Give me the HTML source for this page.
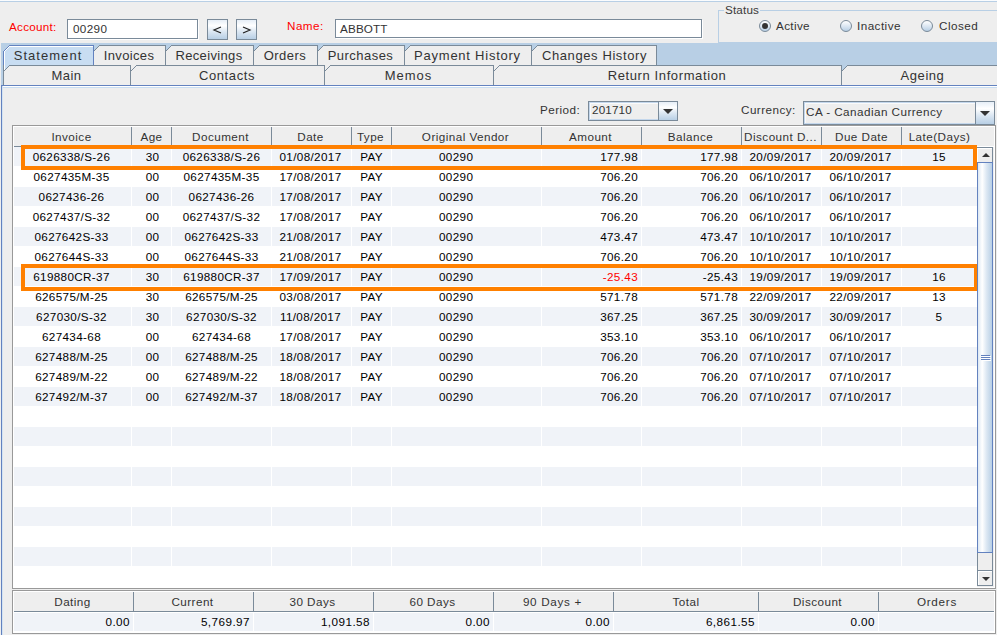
<!DOCTYPE html>
<html><head><meta charset="utf-8"><style>
html,body{margin:0;padding:0}
body{width:997px;height:635px;overflow:hidden;position:relative;background:#eeeeee;font-family:"Liberation Sans",sans-serif;color:#333}
.a{position:absolute}
.t{position:absolute;white-space:pre;line-height:1}
svg.a{display:block}
</style></head><body>
<div class="a" style="left:0px;top:0px;width:997px;height:1px;background:#fafcfe"></div>
<div class="a" style="left:0px;top:1px;width:997px;height:1px;background:#b8cfe5"></div>
<div class="t" style="left:9px;top:21px;font-size:11.7px;color:#ff0000;letter-spacing:0.25px;">Account:</div>
<div class="a" style="left:67px;top:19px;width:131px;height:20px;background:#fff;border:1px solid #7a8a99;box-sizing:border-box;box-shadow:1px 1px 0 #fff"></div>
<div class="t" style="left:73px;top:23px;font-size:11.7px;color:#333;letter-spacing:0.35px;">00290</div>
<div class="a" style="left:207px;top:19px;width:21px;height:21px;border:1px solid #7a8a99;box-sizing:border-box;background:linear-gradient(#e6eef7,#ffffff 30%,#dde8f3 60%,#b8cfe5)"></div>
<svg class="a" style="left:207px;top:19px" width="21" height="21"><polyline points="14,8 7,11 14,14" fill="none" stroke="#222" stroke-width="1.2"/></svg>
<div class="a" style="left:236px;top:19px;width:21px;height:21px;border:1px solid #7a8a99;box-sizing:border-box;background:linear-gradient(#e6eef7,#ffffff 30%,#dde8f3 60%,#b8cfe5)"></div>
<svg class="a" style="left:236px;top:19px" width="21" height="21"><polyline points="7,8 14,11 7,14" fill="none" stroke="#222" stroke-width="1.2"/></svg>
<div class="t" style="left:287px;top:20px;font-size:11.7px;color:#ff0000;letter-spacing:0.45px;">Name:</div>
<div class="a" style="left:335px;top:19px;width:367px;height:19px;background:#fff;border:1px solid #7a8a99;box-sizing:border-box;box-shadow:1px 1px 0 #fff"></div>
<div class="t" style="left:340px;top:23px;font-size:11.7px;letter-spacing:0.15px;color:#333;">ABBOTT</div>
<div class="a" style="left:718px;top:10px;width:290px;height:33px;border:1px solid #b8cfe5;box-sizing:border-box"></div>
<div class="a" style="left:724px;top:2px;width:36px;height:14px;background:#eeeeee"></div>
<div class="t" style="left:725px;top:4px;font-size:11.7px;letter-spacing:0.15px;color:#3a3a3a;">Status</div>
<div class="a" style="left:759px;top:20px;width:12px;height:12px;border-radius:50%;border:1px solid #7a8a99;box-sizing:border-box;background:linear-gradient(#ffffff,#dde8f3 50%,#b8cfe5)"></div>
<div class="a" style="left:762px;top:23px;width:6px;height:6px;border-radius:50%;background:#333"></div>
<div class="t" style="left:776px;top:20px;font-size:11.7px;color:#333;letter-spacing:0.35px;">Active</div>
<div class="a" style="left:840px;top:20px;width:12px;height:12px;border-radius:50%;border:1px solid #7a8a99;box-sizing:border-box;background:linear-gradient(#ffffff,#dde8f3 50%,#b8cfe5)"></div>
<div class="t" style="left:857px;top:20px;font-size:11.7px;color:#333;letter-spacing:0.45px;">Inactive</div>
<div class="a" style="left:921px;top:20px;width:12px;height:12px;border-radius:50%;border:1px solid #7a8a99;box-sizing:border-box;background:linear-gradient(#ffffff,#dde8f3 50%,#b8cfe5)"></div>
<div class="t" style="left:939px;top:20px;font-size:11.7px;color:#333;letter-spacing:0.45px;">Closed</div>
<div class="a" style="left:1px;top:43px;width:717px;height:42px;background:#b8cfe5"></div>
<div class="a" style="left:718px;top:42px;width:279px;height:43px;background:#b8cfe5"></div>
<svg class="a" style="left:3px;top:45px" width="91" height="26" shape-rendering="crispEdges"><rect x="1" y="6" width="90" height="20" fill="#c8ddf2"/><rect x="6" y="1" width="85" height="1" fill="#c8ddf2"/><rect x="5" y="2" width="86" height="1" fill="#c8ddf2"/><rect x="4" y="3" width="87" height="1" fill="#c8ddf2"/><rect x="3" y="4" width="88" height="1" fill="#c8ddf2"/><rect x="2" y="5" width="89" height="1" fill="#c8ddf2"/><rect x="6" y="0" width="85" height="1" fill="#6382bf"/><rect x="1" y="5" width="1" height="1" fill="#6382bf"/><rect x="2" y="4" width="1" height="1" fill="#6382bf"/><rect x="3" y="3" width="1" height="1" fill="#6382bf"/><rect x="4" y="2" width="1" height="1" fill="#6382bf"/><rect x="5" y="1" width="1" height="1" fill="#6382bf"/><rect x="1" y="6" width="1" height="1" fill="#fff"/><rect x="2" y="5" width="1" height="1" fill="#fff"/><rect x="3" y="4" width="1" height="1" fill="#fff"/><rect x="4" y="3" width="1" height="1" fill="#fff"/><rect x="5" y="2" width="1" height="1" fill="#fff"/><rect x="6" y="1" width="84" height="1" fill="#fff"/><rect x="1" y="6" width="1" height="20" fill="#fff"/><rect x="0" y="6" width="1" height="20" fill="#6382bf"/><rect x="90" y="0" width="1" height="26" fill="#6382bf"/></svg>
<svg class="a" style="left:93px;top:45px" width="73" height="26" shape-rendering="crispEdges"><rect x="1" y="6" width="72" height="20" fill="#eeeeee"/><rect x="6" y="1" width="67" height="1" fill="#eeeeee"/><rect x="5" y="2" width="68" height="1" fill="#eeeeee"/><rect x="4" y="3" width="69" height="1" fill="#eeeeee"/><rect x="3" y="4" width="70" height="1" fill="#eeeeee"/><rect x="2" y="5" width="71" height="1" fill="#eeeeee"/><rect x="6" y="0" width="67" height="1" fill="#7a8a99"/><rect x="1" y="5" width="1" height="1" fill="#7a8a99"/><rect x="2" y="4" width="1" height="1" fill="#7a8a99"/><rect x="3" y="3" width="1" height="1" fill="#7a8a99"/><rect x="4" y="2" width="1" height="1" fill="#7a8a99"/><rect x="5" y="1" width="1" height="1" fill="#7a8a99"/><rect x="72" y="0" width="1" height="26" fill="#7a8a99"/></svg>
<svg class="a" style="left:165px;top:45px" width="89" height="26" shape-rendering="crispEdges"><rect x="1" y="6" width="88" height="20" fill="#eeeeee"/><rect x="6" y="1" width="83" height="1" fill="#eeeeee"/><rect x="5" y="2" width="84" height="1" fill="#eeeeee"/><rect x="4" y="3" width="85" height="1" fill="#eeeeee"/><rect x="3" y="4" width="86" height="1" fill="#eeeeee"/><rect x="2" y="5" width="87" height="1" fill="#eeeeee"/><rect x="6" y="0" width="83" height="1" fill="#7a8a99"/><rect x="1" y="5" width="1" height="1" fill="#7a8a99"/><rect x="2" y="4" width="1" height="1" fill="#7a8a99"/><rect x="3" y="3" width="1" height="1" fill="#7a8a99"/><rect x="4" y="2" width="1" height="1" fill="#7a8a99"/><rect x="5" y="1" width="1" height="1" fill="#7a8a99"/><rect x="88" y="0" width="1" height="26" fill="#7a8a99"/></svg>
<svg class="a" style="left:253px;top:45px" width="65" height="26" shape-rendering="crispEdges"><rect x="1" y="6" width="64" height="20" fill="#eeeeee"/><rect x="6" y="1" width="59" height="1" fill="#eeeeee"/><rect x="5" y="2" width="60" height="1" fill="#eeeeee"/><rect x="4" y="3" width="61" height="1" fill="#eeeeee"/><rect x="3" y="4" width="62" height="1" fill="#eeeeee"/><rect x="2" y="5" width="63" height="1" fill="#eeeeee"/><rect x="6" y="0" width="59" height="1" fill="#7a8a99"/><rect x="1" y="5" width="1" height="1" fill="#7a8a99"/><rect x="2" y="4" width="1" height="1" fill="#7a8a99"/><rect x="3" y="3" width="1" height="1" fill="#7a8a99"/><rect x="4" y="2" width="1" height="1" fill="#7a8a99"/><rect x="5" y="1" width="1" height="1" fill="#7a8a99"/><rect x="64" y="0" width="1" height="26" fill="#7a8a99"/></svg>
<svg class="a" style="left:317px;top:45px" width="88" height="26" shape-rendering="crispEdges"><rect x="1" y="6" width="87" height="20" fill="#eeeeee"/><rect x="6" y="1" width="82" height="1" fill="#eeeeee"/><rect x="5" y="2" width="83" height="1" fill="#eeeeee"/><rect x="4" y="3" width="84" height="1" fill="#eeeeee"/><rect x="3" y="4" width="85" height="1" fill="#eeeeee"/><rect x="2" y="5" width="86" height="1" fill="#eeeeee"/><rect x="6" y="0" width="82" height="1" fill="#7a8a99"/><rect x="1" y="5" width="1" height="1" fill="#7a8a99"/><rect x="2" y="4" width="1" height="1" fill="#7a8a99"/><rect x="3" y="3" width="1" height="1" fill="#7a8a99"/><rect x="4" y="2" width="1" height="1" fill="#7a8a99"/><rect x="5" y="1" width="1" height="1" fill="#7a8a99"/><rect x="87" y="0" width="1" height="26" fill="#7a8a99"/></svg>
<svg class="a" style="left:404px;top:45px" width="128" height="26" shape-rendering="crispEdges"><rect x="1" y="6" width="127" height="20" fill="#eeeeee"/><rect x="6" y="1" width="122" height="1" fill="#eeeeee"/><rect x="5" y="2" width="123" height="1" fill="#eeeeee"/><rect x="4" y="3" width="124" height="1" fill="#eeeeee"/><rect x="3" y="4" width="125" height="1" fill="#eeeeee"/><rect x="2" y="5" width="126" height="1" fill="#eeeeee"/><rect x="6" y="0" width="122" height="1" fill="#7a8a99"/><rect x="1" y="5" width="1" height="1" fill="#7a8a99"/><rect x="2" y="4" width="1" height="1" fill="#7a8a99"/><rect x="3" y="3" width="1" height="1" fill="#7a8a99"/><rect x="4" y="2" width="1" height="1" fill="#7a8a99"/><rect x="5" y="1" width="1" height="1" fill="#7a8a99"/><rect x="127" y="0" width="1" height="26" fill="#7a8a99"/></svg>
<svg class="a" style="left:531px;top:45px" width="126" height="26" shape-rendering="crispEdges"><rect x="1" y="6" width="125" height="20" fill="#eeeeee"/><rect x="6" y="1" width="120" height="1" fill="#eeeeee"/><rect x="5" y="2" width="121" height="1" fill="#eeeeee"/><rect x="4" y="3" width="122" height="1" fill="#eeeeee"/><rect x="3" y="4" width="123" height="1" fill="#eeeeee"/><rect x="2" y="5" width="124" height="1" fill="#eeeeee"/><rect x="6" y="0" width="120" height="1" fill="#7a8a99"/><rect x="1" y="5" width="1" height="1" fill="#7a8a99"/><rect x="2" y="4" width="1" height="1" fill="#7a8a99"/><rect x="3" y="3" width="1" height="1" fill="#7a8a99"/><rect x="4" y="2" width="1" height="1" fill="#7a8a99"/><rect x="5" y="1" width="1" height="1" fill="#7a8a99"/><rect x="125" y="0" width="1" height="26" fill="#7a8a99"/></svg>
<svg class="a" style="left:3px;top:65px" width="128" height="20" shape-rendering="crispEdges"><rect x="1" y="6" width="127" height="14" fill="#eeeeee"/><rect x="6" y="1" width="122" height="1" fill="#eeeeee"/><rect x="5" y="2" width="123" height="1" fill="#eeeeee"/><rect x="4" y="3" width="124" height="1" fill="#eeeeee"/><rect x="3" y="4" width="125" height="1" fill="#eeeeee"/><rect x="2" y="5" width="126" height="1" fill="#eeeeee"/><rect x="6" y="0" width="122" height="1" fill="#7a8a99"/><rect x="1" y="5" width="1" height="1" fill="#7a8a99"/><rect x="2" y="4" width="1" height="1" fill="#7a8a99"/><rect x="3" y="3" width="1" height="1" fill="#7a8a99"/><rect x="4" y="2" width="1" height="1" fill="#7a8a99"/><rect x="5" y="1" width="1" height="1" fill="#7a8a99"/><rect x="0" y="0" width="1" height="20" fill="#7a8a99"/><rect x="127" y="0" width="1" height="20" fill="#7a8a99"/></svg>
<svg class="a" style="left:130px;top:65px" width="195" height="20" shape-rendering="crispEdges"><rect x="1" y="6" width="194" height="14" fill="#eeeeee"/><rect x="6" y="1" width="189" height="1" fill="#eeeeee"/><rect x="5" y="2" width="190" height="1" fill="#eeeeee"/><rect x="4" y="3" width="191" height="1" fill="#eeeeee"/><rect x="3" y="4" width="192" height="1" fill="#eeeeee"/><rect x="2" y="5" width="193" height="1" fill="#eeeeee"/><rect x="6" y="0" width="189" height="1" fill="#7a8a99"/><rect x="1" y="5" width="1" height="1" fill="#7a8a99"/><rect x="2" y="4" width="1" height="1" fill="#7a8a99"/><rect x="3" y="3" width="1" height="1" fill="#7a8a99"/><rect x="4" y="2" width="1" height="1" fill="#7a8a99"/><rect x="5" y="1" width="1" height="1" fill="#7a8a99"/><rect x="194" y="0" width="1" height="20" fill="#7a8a99"/></svg>
<svg class="a" style="left:324px;top:65px" width="170" height="20" shape-rendering="crispEdges"><rect x="1" y="6" width="169" height="14" fill="#eeeeee"/><rect x="6" y="1" width="164" height="1" fill="#eeeeee"/><rect x="5" y="2" width="165" height="1" fill="#eeeeee"/><rect x="4" y="3" width="166" height="1" fill="#eeeeee"/><rect x="3" y="4" width="167" height="1" fill="#eeeeee"/><rect x="2" y="5" width="168" height="1" fill="#eeeeee"/><rect x="6" y="0" width="164" height="1" fill="#7a8a99"/><rect x="1" y="5" width="1" height="1" fill="#7a8a99"/><rect x="2" y="4" width="1" height="1" fill="#7a8a99"/><rect x="3" y="3" width="1" height="1" fill="#7a8a99"/><rect x="4" y="2" width="1" height="1" fill="#7a8a99"/><rect x="5" y="1" width="1" height="1" fill="#7a8a99"/><rect x="169" y="0" width="1" height="20" fill="#7a8a99"/></svg>
<svg class="a" style="left:493px;top:65px" width="349" height="20" shape-rendering="crispEdges"><rect x="1" y="6" width="348" height="14" fill="#eeeeee"/><rect x="6" y="1" width="343" height="1" fill="#eeeeee"/><rect x="5" y="2" width="344" height="1" fill="#eeeeee"/><rect x="4" y="3" width="345" height="1" fill="#eeeeee"/><rect x="3" y="4" width="346" height="1" fill="#eeeeee"/><rect x="2" y="5" width="347" height="1" fill="#eeeeee"/><rect x="6" y="0" width="343" height="1" fill="#7a8a99"/><rect x="1" y="5" width="1" height="1" fill="#7a8a99"/><rect x="2" y="4" width="1" height="1" fill="#7a8a99"/><rect x="3" y="3" width="1" height="1" fill="#7a8a99"/><rect x="4" y="2" width="1" height="1" fill="#7a8a99"/><rect x="5" y="1" width="1" height="1" fill="#7a8a99"/><rect x="348" y="0" width="1" height="20" fill="#7a8a99"/></svg>
<svg class="a" style="left:841px;top:65px" width="164" height="20" shape-rendering="crispEdges"><rect x="1" y="6" width="163" height="14" fill="#eeeeee"/><rect x="6" y="1" width="158" height="1" fill="#eeeeee"/><rect x="5" y="2" width="159" height="1" fill="#eeeeee"/><rect x="4" y="3" width="160" height="1" fill="#eeeeee"/><rect x="3" y="4" width="161" height="1" fill="#eeeeee"/><rect x="2" y="5" width="162" height="1" fill="#eeeeee"/><rect x="6" y="0" width="158" height="1" fill="#7a8a99"/><rect x="1" y="5" width="1" height="1" fill="#7a8a99"/><rect x="2" y="4" width="1" height="1" fill="#7a8a99"/><rect x="3" y="3" width="1" height="1" fill="#7a8a99"/><rect x="4" y="2" width="1" height="1" fill="#7a8a99"/><rect x="5" y="1" width="1" height="1" fill="#7a8a99"/><rect x="163" y="0" width="1" height="20" fill="#7a8a99"/></svg>
<div class="t" style="left:3px;top:49px;width:90px;text-align:center;font-size:13px;color:#333;letter-spacing:1.04px">Statement</div>
<div class="t" style="left:93px;top:49px;width:72px;text-align:center;font-size:13px;color:#333;letter-spacing:0.35px">Invoices</div>
<div class="t" style="left:165px;top:49px;width:88px;text-align:center;font-size:13px;color:#333;letter-spacing:0.35px">Receivings</div>
<div class="t" style="left:253px;top:49px;width:64px;text-align:center;font-size:13px;color:#333;letter-spacing:0.45px">Orders</div>
<div class="t" style="left:317px;top:49px;width:87px;text-align:center;font-size:13px;color:#333;letter-spacing:0.47px">Purchases</div>
<div class="t" style="left:404px;top:49px;width:127px;text-align:center;font-size:13px;color:#333;letter-spacing:0.76px">Payment History</div>
<div class="t" style="left:532px;top:49px;width:125px;text-align:center;font-size:13px;color:#333;letter-spacing:0.6px">Changes History</div>
<div class="t" style="left:3px;top:69px;width:127px;text-align:center;font-size:13px;color:#333;letter-spacing:0.48px">Main</div>
<div class="t" style="left:130px;top:69px;width:194px;text-align:center;font-size:13px;color:#333;letter-spacing:0.6px">Contacts</div>
<div class="t" style="left:324px;top:69px;width:169px;text-align:center;font-size:13px;color:#333;letter-spacing:0.97px">Memos</div>
<div class="t" style="left:493px;top:69px;width:348px;text-align:center;font-size:13px;color:#333;letter-spacing:0.61px">Return Information</div>
<div class="t" style="left:841px;top:69px;width:163px;text-align:center;font-size:13px;color:#333;letter-spacing:0.55px">Ageing</div>
<div class="a" style="left:1px;top:85px;width:996px;height:1px;background:#6382bf"></div>
<div class="a" style="left:1px;top:85px;width:1px;height:550px;background:#6382bf"></div>
<div class="a" style="left:2px;top:86px;width:995px;height:1px;background:#fff"></div>
<div class="a" style="left:2px;top:87px;width:995px;height:1px;background:#c8ddf2"></div>
<div class="a" style="left:2px;top:86px;width:1px;height:549px;background:#d4e4f3"></div>
<div class="t" style="left:540px;top:104px;font-size:11.7px;color:#333;letter-spacing:0.45px;">Period:</div>
<div class="a" style="left:588px;top:101px;width:90px;height:20px;border:1px solid #7a8a99;box-sizing:border-box;background:#eeeeee;box-shadow:inset 0 0 0 1px #c4d7ec, inset 2px 2px 0 #fafafa"></div>
<div class="t" style="left:592px;top:104px;font-size:11.7px;letter-spacing:0.15px;color:#333;">201710</div>
<div class="a" style="left:658px;top:101px;width:20px;height:20px;border:1px solid #7a8a99;box-sizing:border-box;background:linear-gradient(#e6eef7,#ffffff 30%,#dde8f3 60%,#b8cfe5)"></div>
<svg class="a" style="left:663px;top:109px" width="10" height="6"><polygon points="0,0 10,0 5,5" fill="#333"/></svg>
<div class="t" style="left:741px;top:104px;font-size:11.7px;color:#333;letter-spacing:0.45px;">Currency:</div>
<div class="a" style="left:803px;top:101px;width:192px;height:24px;border:1px solid #7a8a99;box-sizing:border-box;background:#eeeeee;box-shadow:inset 0 0 0 1px #c4d7ec, inset 2px 2px 0 #fafafa"></div>
<div class="t" style="left:806px;top:106px;font-size:11.7px;color:#333;letter-spacing:0.45px;">CA - Canadian Currency</div>
<div class="a" style="left:975px;top:101px;width:20px;height:24px;border:1px solid #7a8a99;box-sizing:border-box;background:linear-gradient(#e6eef7,#ffffff 30%,#dde8f3 60%,#b8cfe5)"></div>
<svg class="a" style="left:980px;top:111px" width="10" height="6"><polygon points="0,0 10,0 5,5" fill="#333"/></svg>
<div class="a" style="left:12px;top:125px;width:984px;height:464px;border:1px solid #999999;box-sizing:border-box;background:#fff"></div>
<div class="a" style="left:14px;top:127px;width:980px;height:19px;background:#eeeeee"></div>
<div class="a" style="left:14px;top:146px;width:963px;height:1px;background:#7a8a99"></div>
<div class="a" style="left:131px;top:127px;width:1px;height:19px;background:#7a8a99"></div>
<div class="a" style="left:171px;top:127px;width:1px;height:19px;background:#7a8a99"></div>
<div class="a" style="left:271px;top:127px;width:1px;height:19px;background:#7a8a99"></div>
<div class="a" style="left:351px;top:127px;width:1px;height:19px;background:#7a8a99"></div>
<div class="a" style="left:391px;top:127px;width:1px;height:19px;background:#7a8a99"></div>
<div class="a" style="left:541px;top:127px;width:1px;height:19px;background:#7a8a99"></div>
<div class="a" style="left:641px;top:127px;width:1px;height:19px;background:#7a8a99"></div>
<div class="a" style="left:741px;top:127px;width:1px;height:19px;background:#7a8a99"></div>
<div class="a" style="left:821px;top:127px;width:1px;height:19px;background:#7a8a99"></div>
<div class="a" style="left:901px;top:127px;width:1px;height:19px;background:#7a8a99"></div>
<div class="t" style="left:13px;top:131px;width:117px;text-align:center;font-size:11.7px;color:#333;letter-spacing:0.45px">Invoice</div>
<div class="t" style="left:132px;top:131px;width:39px;text-align:center;font-size:11.7px;color:#333;letter-spacing:0.45px">Age</div>
<div class="t" style="left:171px;top:131px;width:99px;text-align:center;font-size:11.7px;color:#333;letter-spacing:0.45px">Document</div>
<div class="t" style="left:271px;top:131px;width:79px;text-align:center;font-size:11.7px;color:#333;letter-spacing:0.45px">Date</div>
<div class="t" style="left:351px;top:131px;width:39px;text-align:center;font-size:11.7px;color:#333;letter-spacing:0.45px">Type</div>
<div class="t" style="left:391px;top:131px;width:149px;text-align:center;font-size:11.7px;color:#333;letter-spacing:0.45px">Original Vendor</div>
<div class="t" style="left:541px;top:131px;width:99px;text-align:center;font-size:11.7px;color:#333;letter-spacing:0.45px">Amount</div>
<div class="t" style="left:641px;top:131px;width:99px;text-align:center;font-size:11.7px;color:#333;letter-spacing:0.45px">Balance</div>
<div class="t" style="left:741px;top:131px;width:79px;text-align:center;font-size:11.7px;color:#333;letter-spacing:0.45px">Discount D...</div>
<div class="t" style="left:822px;top:131px;width:79px;text-align:center;font-size:11.7px;color:#333;letter-spacing:0.45px">Due Date</div>
<div class="t" style="left:902px;top:131px;width:75px;text-align:center;font-size:11.7px;color:#333;letter-spacing:0.45px">Late(Days)</div>
<div class="a" style="left:14px;top:147px;width:963px;height:19px;background:#f0f3f8"></div>
<div class="a" style="left:131px;top:147px;width:1px;height:19px;background:#fff"></div>
<div class="a" style="left:171px;top:147px;width:1px;height:19px;background:#fff"></div>
<div class="a" style="left:271px;top:147px;width:1px;height:19px;background:#fff"></div>
<div class="a" style="left:351px;top:147px;width:1px;height:19px;background:#fff"></div>
<div class="a" style="left:391px;top:147px;width:1px;height:19px;background:#fff"></div>
<div class="a" style="left:541px;top:147px;width:1px;height:19px;background:#fff"></div>
<div class="a" style="left:641px;top:147px;width:1px;height:19px;background:#fff"></div>
<div class="a" style="left:741px;top:147px;width:1px;height:19px;background:#fff"></div>
<div class="a" style="left:821px;top:147px;width:1px;height:19px;background:#fff"></div>
<div class="a" style="left:901px;top:147px;width:1px;height:19px;background:#fff"></div>
<div class="t" style="left:13px;top:151px;width:117px;text-align:center;font-size:11.7px;color:#000;letter-spacing:0.35px">0626338/S-26</div>
<div class="t" style="left:133px;top:151px;width:39px;text-align:center;font-size:11.7px;color:#000;letter-spacing:0.35px">30</div>
<div class="t" style="left:172px;top:151px;width:99px;text-align:center;font-size:11.7px;color:#000;letter-spacing:0.35px">0626338/S-26</div>
<div class="t" style="left:271px;top:151px;width:79px;text-align:center;font-size:11.7px;color:#000;letter-spacing:0.35px">01/08/2017</div>
<div class="t" style="left:352px;top:151px;width:39px;text-align:center;font-size:11.7px;color:#000;letter-spacing:0.35px">PAY</div>
<div class="t" style="left:439px;top:151px;font-size:11.7px;color:#000;letter-spacing:0.35px">00290</div>
<div class="t" style="left:542px;top:151px;width:96px;text-align:right;font-size:11.7px;color:#000;letter-spacing:0.35px">177.98</div>
<div class="t" style="left:642px;top:151px;width:96px;text-align:right;font-size:11.7px;color:#000;letter-spacing:0.35px">177.98</div>
<div class="t" style="left:741px;top:151px;width:79px;text-align:center;font-size:11.7px;color:#000;letter-spacing:0.35px">20/09/2017</div>
<div class="t" style="left:821px;top:151px;width:79px;text-align:center;font-size:11.7px;color:#000;letter-spacing:0.35px">20/09/2017</div>
<div class="t" style="left:902px;top:151px;width:74px;text-align:center;font-size:11.7px;color:#000;letter-spacing:0.35px">15</div>
<div class="t" style="left:13px;top:171px;width:117px;text-align:center;font-size:11.7px;color:#000;letter-spacing:0.35px">0627435M-35</div>
<div class="t" style="left:133px;top:171px;width:39px;text-align:center;font-size:11.7px;color:#000;letter-spacing:0.35px">00</div>
<div class="t" style="left:172px;top:171px;width:99px;text-align:center;font-size:11.7px;color:#000;letter-spacing:0.35px">0627435M-35</div>
<div class="t" style="left:271px;top:171px;width:79px;text-align:center;font-size:11.7px;color:#000;letter-spacing:0.35px">17/08/2017</div>
<div class="t" style="left:352px;top:171px;width:39px;text-align:center;font-size:11.7px;color:#000;letter-spacing:0.35px">PAY</div>
<div class="t" style="left:439px;top:171px;font-size:11.7px;color:#000;letter-spacing:0.35px">00290</div>
<div class="t" style="left:542px;top:171px;width:96px;text-align:right;font-size:11.7px;color:#000;letter-spacing:0.35px">706.20</div>
<div class="t" style="left:642px;top:171px;width:96px;text-align:right;font-size:11.7px;color:#000;letter-spacing:0.35px">706.20</div>
<div class="t" style="left:741px;top:171px;width:79px;text-align:center;font-size:11.7px;color:#000;letter-spacing:0.35px">06/10/2017</div>
<div class="t" style="left:821px;top:171px;width:79px;text-align:center;font-size:11.7px;color:#000;letter-spacing:0.35px">06/10/2017</div>
<div class="a" style="left:14px;top:187px;width:963px;height:19px;background:#f0f3f8"></div>
<div class="a" style="left:131px;top:187px;width:1px;height:19px;background:#fff"></div>
<div class="a" style="left:171px;top:187px;width:1px;height:19px;background:#fff"></div>
<div class="a" style="left:271px;top:187px;width:1px;height:19px;background:#fff"></div>
<div class="a" style="left:351px;top:187px;width:1px;height:19px;background:#fff"></div>
<div class="a" style="left:391px;top:187px;width:1px;height:19px;background:#fff"></div>
<div class="a" style="left:541px;top:187px;width:1px;height:19px;background:#fff"></div>
<div class="a" style="left:641px;top:187px;width:1px;height:19px;background:#fff"></div>
<div class="a" style="left:741px;top:187px;width:1px;height:19px;background:#fff"></div>
<div class="a" style="left:821px;top:187px;width:1px;height:19px;background:#fff"></div>
<div class="a" style="left:901px;top:187px;width:1px;height:19px;background:#fff"></div>
<div class="t" style="left:13px;top:191px;width:117px;text-align:center;font-size:11.7px;color:#000;letter-spacing:0.35px">0627436-26</div>
<div class="t" style="left:133px;top:191px;width:39px;text-align:center;font-size:11.7px;color:#000;letter-spacing:0.35px">00</div>
<div class="t" style="left:172px;top:191px;width:99px;text-align:center;font-size:11.7px;color:#000;letter-spacing:0.35px">0627436-26</div>
<div class="t" style="left:271px;top:191px;width:79px;text-align:center;font-size:11.7px;color:#000;letter-spacing:0.35px">17/08/2017</div>
<div class="t" style="left:352px;top:191px;width:39px;text-align:center;font-size:11.7px;color:#000;letter-spacing:0.35px">PAY</div>
<div class="t" style="left:439px;top:191px;font-size:11.7px;color:#000;letter-spacing:0.35px">00290</div>
<div class="t" style="left:542px;top:191px;width:96px;text-align:right;font-size:11.7px;color:#000;letter-spacing:0.35px">706.20</div>
<div class="t" style="left:642px;top:191px;width:96px;text-align:right;font-size:11.7px;color:#000;letter-spacing:0.35px">706.20</div>
<div class="t" style="left:741px;top:191px;width:79px;text-align:center;font-size:11.7px;color:#000;letter-spacing:0.35px">06/10/2017</div>
<div class="t" style="left:821px;top:191px;width:79px;text-align:center;font-size:11.7px;color:#000;letter-spacing:0.35px">06/10/2017</div>
<div class="t" style="left:13px;top:211px;width:117px;text-align:center;font-size:11.7px;color:#000;letter-spacing:0.35px">0627437/S-32</div>
<div class="t" style="left:133px;top:211px;width:39px;text-align:center;font-size:11.7px;color:#000;letter-spacing:0.35px">00</div>
<div class="t" style="left:172px;top:211px;width:99px;text-align:center;font-size:11.7px;color:#000;letter-spacing:0.35px">0627437/S-32</div>
<div class="t" style="left:271px;top:211px;width:79px;text-align:center;font-size:11.7px;color:#000;letter-spacing:0.35px">17/08/2017</div>
<div class="t" style="left:352px;top:211px;width:39px;text-align:center;font-size:11.7px;color:#000;letter-spacing:0.35px">PAY</div>
<div class="t" style="left:439px;top:211px;font-size:11.7px;color:#000;letter-spacing:0.35px">00290</div>
<div class="t" style="left:542px;top:211px;width:96px;text-align:right;font-size:11.7px;color:#000;letter-spacing:0.35px">706.20</div>
<div class="t" style="left:642px;top:211px;width:96px;text-align:right;font-size:11.7px;color:#000;letter-spacing:0.35px">706.20</div>
<div class="t" style="left:741px;top:211px;width:79px;text-align:center;font-size:11.7px;color:#000;letter-spacing:0.35px">06/10/2017</div>
<div class="t" style="left:821px;top:211px;width:79px;text-align:center;font-size:11.7px;color:#000;letter-spacing:0.35px">06/10/2017</div>
<div class="a" style="left:14px;top:227px;width:963px;height:19px;background:#f0f3f8"></div>
<div class="a" style="left:131px;top:227px;width:1px;height:19px;background:#fff"></div>
<div class="a" style="left:171px;top:227px;width:1px;height:19px;background:#fff"></div>
<div class="a" style="left:271px;top:227px;width:1px;height:19px;background:#fff"></div>
<div class="a" style="left:351px;top:227px;width:1px;height:19px;background:#fff"></div>
<div class="a" style="left:391px;top:227px;width:1px;height:19px;background:#fff"></div>
<div class="a" style="left:541px;top:227px;width:1px;height:19px;background:#fff"></div>
<div class="a" style="left:641px;top:227px;width:1px;height:19px;background:#fff"></div>
<div class="a" style="left:741px;top:227px;width:1px;height:19px;background:#fff"></div>
<div class="a" style="left:821px;top:227px;width:1px;height:19px;background:#fff"></div>
<div class="a" style="left:901px;top:227px;width:1px;height:19px;background:#fff"></div>
<div class="t" style="left:13px;top:231px;width:117px;text-align:center;font-size:11.7px;color:#000;letter-spacing:0.35px">0627642S-33</div>
<div class="t" style="left:133px;top:231px;width:39px;text-align:center;font-size:11.7px;color:#000;letter-spacing:0.35px">00</div>
<div class="t" style="left:172px;top:231px;width:99px;text-align:center;font-size:11.7px;color:#000;letter-spacing:0.35px">0627642S-33</div>
<div class="t" style="left:271px;top:231px;width:79px;text-align:center;font-size:11.7px;color:#000;letter-spacing:0.35px">21/08/2017</div>
<div class="t" style="left:352px;top:231px;width:39px;text-align:center;font-size:11.7px;color:#000;letter-spacing:0.35px">PAY</div>
<div class="t" style="left:439px;top:231px;font-size:11.7px;color:#000;letter-spacing:0.35px">00290</div>
<div class="t" style="left:542px;top:231px;width:96px;text-align:right;font-size:11.7px;color:#000;letter-spacing:0.35px">473.47</div>
<div class="t" style="left:642px;top:231px;width:96px;text-align:right;font-size:11.7px;color:#000;letter-spacing:0.35px">473.47</div>
<div class="t" style="left:741px;top:231px;width:79px;text-align:center;font-size:11.7px;color:#000;letter-spacing:0.35px">10/10/2017</div>
<div class="t" style="left:821px;top:231px;width:79px;text-align:center;font-size:11.7px;color:#000;letter-spacing:0.35px">10/10/2017</div>
<div class="t" style="left:13px;top:251px;width:117px;text-align:center;font-size:11.7px;color:#000;letter-spacing:0.35px">0627644S-33</div>
<div class="t" style="left:133px;top:251px;width:39px;text-align:center;font-size:11.7px;color:#000;letter-spacing:0.35px">00</div>
<div class="t" style="left:172px;top:251px;width:99px;text-align:center;font-size:11.7px;color:#000;letter-spacing:0.35px">0627644S-33</div>
<div class="t" style="left:271px;top:251px;width:79px;text-align:center;font-size:11.7px;color:#000;letter-spacing:0.35px">21/08/2017</div>
<div class="t" style="left:352px;top:251px;width:39px;text-align:center;font-size:11.7px;color:#000;letter-spacing:0.35px">PAY</div>
<div class="t" style="left:439px;top:251px;font-size:11.7px;color:#000;letter-spacing:0.35px">00290</div>
<div class="t" style="left:542px;top:251px;width:96px;text-align:right;font-size:11.7px;color:#000;letter-spacing:0.35px">706.20</div>
<div class="t" style="left:642px;top:251px;width:96px;text-align:right;font-size:11.7px;color:#000;letter-spacing:0.35px">706.20</div>
<div class="t" style="left:741px;top:251px;width:79px;text-align:center;font-size:11.7px;color:#000;letter-spacing:0.35px">10/10/2017</div>
<div class="t" style="left:821px;top:251px;width:79px;text-align:center;font-size:11.7px;color:#000;letter-spacing:0.35px">10/10/2017</div>
<div class="a" style="left:14px;top:267px;width:963px;height:19px;background:#f0f3f8"></div>
<div class="a" style="left:131px;top:267px;width:1px;height:19px;background:#fff"></div>
<div class="a" style="left:171px;top:267px;width:1px;height:19px;background:#fff"></div>
<div class="a" style="left:271px;top:267px;width:1px;height:19px;background:#fff"></div>
<div class="a" style="left:351px;top:267px;width:1px;height:19px;background:#fff"></div>
<div class="a" style="left:391px;top:267px;width:1px;height:19px;background:#fff"></div>
<div class="a" style="left:541px;top:267px;width:1px;height:19px;background:#fff"></div>
<div class="a" style="left:641px;top:267px;width:1px;height:19px;background:#fff"></div>
<div class="a" style="left:741px;top:267px;width:1px;height:19px;background:#fff"></div>
<div class="a" style="left:821px;top:267px;width:1px;height:19px;background:#fff"></div>
<div class="a" style="left:901px;top:267px;width:1px;height:19px;background:#fff"></div>
<div class="t" style="left:13px;top:271px;width:117px;text-align:center;font-size:11.7px;color:#000;letter-spacing:0.35px">619880CR-37</div>
<div class="t" style="left:133px;top:271px;width:39px;text-align:center;font-size:11.7px;color:#000;letter-spacing:0.35px">30</div>
<div class="t" style="left:172px;top:271px;width:99px;text-align:center;font-size:11.7px;color:#000;letter-spacing:0.35px">619880CR-37</div>
<div class="t" style="left:271px;top:271px;width:79px;text-align:center;font-size:11.7px;color:#000;letter-spacing:0.35px">17/09/2017</div>
<div class="t" style="left:352px;top:271px;width:39px;text-align:center;font-size:11.7px;color:#000;letter-spacing:0.35px">PAY</div>
<div class="t" style="left:439px;top:271px;font-size:11.7px;color:#000;letter-spacing:0.35px">00290</div>
<div class="t" style="left:542px;top:271px;width:96px;text-align:right;font-size:11.7px;color:#ff0000;letter-spacing:0.35px">-25.43</div>
<div class="t" style="left:642px;top:271px;width:96px;text-align:right;font-size:11.7px;color:#000;letter-spacing:0.35px">-25.43</div>
<div class="t" style="left:741px;top:271px;width:79px;text-align:center;font-size:11.7px;color:#000;letter-spacing:0.35px">19/09/2017</div>
<div class="t" style="left:821px;top:271px;width:79px;text-align:center;font-size:11.7px;color:#000;letter-spacing:0.35px">19/09/2017</div>
<div class="t" style="left:902px;top:271px;width:74px;text-align:center;font-size:11.7px;color:#000;letter-spacing:0.35px">16</div>
<div class="t" style="left:13px;top:291px;width:117px;text-align:center;font-size:11.7px;color:#000;letter-spacing:0.35px">626575/M-25</div>
<div class="t" style="left:133px;top:291px;width:39px;text-align:center;font-size:11.7px;color:#000;letter-spacing:0.35px">30</div>
<div class="t" style="left:172px;top:291px;width:99px;text-align:center;font-size:11.7px;color:#000;letter-spacing:0.35px">626575/M-25</div>
<div class="t" style="left:271px;top:291px;width:79px;text-align:center;font-size:11.7px;color:#000;letter-spacing:0.35px">03/08/2017</div>
<div class="t" style="left:352px;top:291px;width:39px;text-align:center;font-size:11.7px;color:#000;letter-spacing:0.35px">PAY</div>
<div class="t" style="left:439px;top:291px;font-size:11.7px;color:#000;letter-spacing:0.35px">00290</div>
<div class="t" style="left:542px;top:291px;width:96px;text-align:right;font-size:11.7px;color:#000;letter-spacing:0.35px">571.78</div>
<div class="t" style="left:642px;top:291px;width:96px;text-align:right;font-size:11.7px;color:#000;letter-spacing:0.35px">571.78</div>
<div class="t" style="left:741px;top:291px;width:79px;text-align:center;font-size:11.7px;color:#000;letter-spacing:0.35px">22/09/2017</div>
<div class="t" style="left:821px;top:291px;width:79px;text-align:center;font-size:11.7px;color:#000;letter-spacing:0.35px">22/09/2017</div>
<div class="t" style="left:902px;top:291px;width:74px;text-align:center;font-size:11.7px;color:#000;letter-spacing:0.35px">13</div>
<div class="a" style="left:14px;top:307px;width:963px;height:19px;background:#f0f3f8"></div>
<div class="a" style="left:131px;top:307px;width:1px;height:19px;background:#fff"></div>
<div class="a" style="left:171px;top:307px;width:1px;height:19px;background:#fff"></div>
<div class="a" style="left:271px;top:307px;width:1px;height:19px;background:#fff"></div>
<div class="a" style="left:351px;top:307px;width:1px;height:19px;background:#fff"></div>
<div class="a" style="left:391px;top:307px;width:1px;height:19px;background:#fff"></div>
<div class="a" style="left:541px;top:307px;width:1px;height:19px;background:#fff"></div>
<div class="a" style="left:641px;top:307px;width:1px;height:19px;background:#fff"></div>
<div class="a" style="left:741px;top:307px;width:1px;height:19px;background:#fff"></div>
<div class="a" style="left:821px;top:307px;width:1px;height:19px;background:#fff"></div>
<div class="a" style="left:901px;top:307px;width:1px;height:19px;background:#fff"></div>
<div class="t" style="left:13px;top:311px;width:117px;text-align:center;font-size:11.7px;color:#000;letter-spacing:0.35px">627030/S-32</div>
<div class="t" style="left:133px;top:311px;width:39px;text-align:center;font-size:11.7px;color:#000;letter-spacing:0.35px">30</div>
<div class="t" style="left:172px;top:311px;width:99px;text-align:center;font-size:11.7px;color:#000;letter-spacing:0.35px">627030/S-32</div>
<div class="t" style="left:271px;top:311px;width:79px;text-align:center;font-size:11.7px;color:#000;letter-spacing:0.35px">11/08/2017</div>
<div class="t" style="left:352px;top:311px;width:39px;text-align:center;font-size:11.7px;color:#000;letter-spacing:0.35px">PAY</div>
<div class="t" style="left:439px;top:311px;font-size:11.7px;color:#000;letter-spacing:0.35px">00290</div>
<div class="t" style="left:542px;top:311px;width:96px;text-align:right;font-size:11.7px;color:#000;letter-spacing:0.35px">367.25</div>
<div class="t" style="left:642px;top:311px;width:96px;text-align:right;font-size:11.7px;color:#000;letter-spacing:0.35px">367.25</div>
<div class="t" style="left:741px;top:311px;width:79px;text-align:center;font-size:11.7px;color:#000;letter-spacing:0.35px">30/09/2017</div>
<div class="t" style="left:821px;top:311px;width:79px;text-align:center;font-size:11.7px;color:#000;letter-spacing:0.35px">30/09/2017</div>
<div class="t" style="left:902px;top:311px;width:74px;text-align:center;font-size:11.7px;color:#000;letter-spacing:0.35px">5</div>
<div class="t" style="left:13px;top:331px;width:117px;text-align:center;font-size:11.7px;color:#000;letter-spacing:0.35px">627434-68</div>
<div class="t" style="left:133px;top:331px;width:39px;text-align:center;font-size:11.7px;color:#000;letter-spacing:0.35px">00</div>
<div class="t" style="left:172px;top:331px;width:99px;text-align:center;font-size:11.7px;color:#000;letter-spacing:0.35px">627434-68</div>
<div class="t" style="left:271px;top:331px;width:79px;text-align:center;font-size:11.7px;color:#000;letter-spacing:0.35px">17/08/2017</div>
<div class="t" style="left:352px;top:331px;width:39px;text-align:center;font-size:11.7px;color:#000;letter-spacing:0.35px">PAY</div>
<div class="t" style="left:439px;top:331px;font-size:11.7px;color:#000;letter-spacing:0.35px">00290</div>
<div class="t" style="left:542px;top:331px;width:96px;text-align:right;font-size:11.7px;color:#000;letter-spacing:0.35px">353.10</div>
<div class="t" style="left:642px;top:331px;width:96px;text-align:right;font-size:11.7px;color:#000;letter-spacing:0.35px">353.10</div>
<div class="t" style="left:741px;top:331px;width:79px;text-align:center;font-size:11.7px;color:#000;letter-spacing:0.35px">06/10/2017</div>
<div class="t" style="left:821px;top:331px;width:79px;text-align:center;font-size:11.7px;color:#000;letter-spacing:0.35px">06/10/2017</div>
<div class="a" style="left:14px;top:347px;width:963px;height:19px;background:#f0f3f8"></div>
<div class="a" style="left:131px;top:347px;width:1px;height:19px;background:#fff"></div>
<div class="a" style="left:171px;top:347px;width:1px;height:19px;background:#fff"></div>
<div class="a" style="left:271px;top:347px;width:1px;height:19px;background:#fff"></div>
<div class="a" style="left:351px;top:347px;width:1px;height:19px;background:#fff"></div>
<div class="a" style="left:391px;top:347px;width:1px;height:19px;background:#fff"></div>
<div class="a" style="left:541px;top:347px;width:1px;height:19px;background:#fff"></div>
<div class="a" style="left:641px;top:347px;width:1px;height:19px;background:#fff"></div>
<div class="a" style="left:741px;top:347px;width:1px;height:19px;background:#fff"></div>
<div class="a" style="left:821px;top:347px;width:1px;height:19px;background:#fff"></div>
<div class="a" style="left:901px;top:347px;width:1px;height:19px;background:#fff"></div>
<div class="t" style="left:13px;top:351px;width:117px;text-align:center;font-size:11.7px;color:#000;letter-spacing:0.35px">627488/M-25</div>
<div class="t" style="left:133px;top:351px;width:39px;text-align:center;font-size:11.7px;color:#000;letter-spacing:0.35px">00</div>
<div class="t" style="left:172px;top:351px;width:99px;text-align:center;font-size:11.7px;color:#000;letter-spacing:0.35px">627488/M-25</div>
<div class="t" style="left:271px;top:351px;width:79px;text-align:center;font-size:11.7px;color:#000;letter-spacing:0.35px">18/08/2017</div>
<div class="t" style="left:352px;top:351px;width:39px;text-align:center;font-size:11.7px;color:#000;letter-spacing:0.35px">PAY</div>
<div class="t" style="left:439px;top:351px;font-size:11.7px;color:#000;letter-spacing:0.35px">00290</div>
<div class="t" style="left:542px;top:351px;width:96px;text-align:right;font-size:11.7px;color:#000;letter-spacing:0.35px">706.20</div>
<div class="t" style="left:642px;top:351px;width:96px;text-align:right;font-size:11.7px;color:#000;letter-spacing:0.35px">706.20</div>
<div class="t" style="left:741px;top:351px;width:79px;text-align:center;font-size:11.7px;color:#000;letter-spacing:0.35px">07/10/2017</div>
<div class="t" style="left:821px;top:351px;width:79px;text-align:center;font-size:11.7px;color:#000;letter-spacing:0.35px">07/10/2017</div>
<div class="t" style="left:13px;top:371px;width:117px;text-align:center;font-size:11.7px;color:#000;letter-spacing:0.35px">627489/M-22</div>
<div class="t" style="left:133px;top:371px;width:39px;text-align:center;font-size:11.7px;color:#000;letter-spacing:0.35px">00</div>
<div class="t" style="left:172px;top:371px;width:99px;text-align:center;font-size:11.7px;color:#000;letter-spacing:0.35px">627489/M-22</div>
<div class="t" style="left:271px;top:371px;width:79px;text-align:center;font-size:11.7px;color:#000;letter-spacing:0.35px">18/08/2017</div>
<div class="t" style="left:352px;top:371px;width:39px;text-align:center;font-size:11.7px;color:#000;letter-spacing:0.35px">PAY</div>
<div class="t" style="left:439px;top:371px;font-size:11.7px;color:#000;letter-spacing:0.35px">00290</div>
<div class="t" style="left:542px;top:371px;width:96px;text-align:right;font-size:11.7px;color:#000;letter-spacing:0.35px">706.20</div>
<div class="t" style="left:642px;top:371px;width:96px;text-align:right;font-size:11.7px;color:#000;letter-spacing:0.35px">706.20</div>
<div class="t" style="left:741px;top:371px;width:79px;text-align:center;font-size:11.7px;color:#000;letter-spacing:0.35px">07/10/2017</div>
<div class="t" style="left:821px;top:371px;width:79px;text-align:center;font-size:11.7px;color:#000;letter-spacing:0.35px">07/10/2017</div>
<div class="a" style="left:14px;top:387px;width:963px;height:19px;background:#f0f3f8"></div>
<div class="a" style="left:131px;top:387px;width:1px;height:19px;background:#fff"></div>
<div class="a" style="left:171px;top:387px;width:1px;height:19px;background:#fff"></div>
<div class="a" style="left:271px;top:387px;width:1px;height:19px;background:#fff"></div>
<div class="a" style="left:351px;top:387px;width:1px;height:19px;background:#fff"></div>
<div class="a" style="left:391px;top:387px;width:1px;height:19px;background:#fff"></div>
<div class="a" style="left:541px;top:387px;width:1px;height:19px;background:#fff"></div>
<div class="a" style="left:641px;top:387px;width:1px;height:19px;background:#fff"></div>
<div class="a" style="left:741px;top:387px;width:1px;height:19px;background:#fff"></div>
<div class="a" style="left:821px;top:387px;width:1px;height:19px;background:#fff"></div>
<div class="a" style="left:901px;top:387px;width:1px;height:19px;background:#fff"></div>
<div class="t" style="left:13px;top:391px;width:117px;text-align:center;font-size:11.7px;color:#000;letter-spacing:0.35px">627492/M-37</div>
<div class="t" style="left:133px;top:391px;width:39px;text-align:center;font-size:11.7px;color:#000;letter-spacing:0.35px">00</div>
<div class="t" style="left:172px;top:391px;width:99px;text-align:center;font-size:11.7px;color:#000;letter-spacing:0.35px">627492/M-37</div>
<div class="t" style="left:271px;top:391px;width:79px;text-align:center;font-size:11.7px;color:#000;letter-spacing:0.35px">18/08/2017</div>
<div class="t" style="left:352px;top:391px;width:39px;text-align:center;font-size:11.7px;color:#000;letter-spacing:0.35px">PAY</div>
<div class="t" style="left:439px;top:391px;font-size:11.7px;color:#000;letter-spacing:0.35px">00290</div>
<div class="t" style="left:542px;top:391px;width:96px;text-align:right;font-size:11.7px;color:#000;letter-spacing:0.35px">706.20</div>
<div class="t" style="left:642px;top:391px;width:96px;text-align:right;font-size:11.7px;color:#000;letter-spacing:0.35px">706.20</div>
<div class="t" style="left:741px;top:391px;width:79px;text-align:center;font-size:11.7px;color:#000;letter-spacing:0.35px">07/10/2017</div>
<div class="t" style="left:821px;top:391px;width:79px;text-align:center;font-size:11.7px;color:#000;letter-spacing:0.35px">07/10/2017</div>
<div class="a" style="left:14px;top:427px;width:963px;height:19px;background:#f0f3f8"></div>
<div class="a" style="left:131px;top:427px;width:1px;height:19px;background:#fff"></div>
<div class="a" style="left:171px;top:427px;width:1px;height:19px;background:#fff"></div>
<div class="a" style="left:271px;top:427px;width:1px;height:19px;background:#fff"></div>
<div class="a" style="left:351px;top:427px;width:1px;height:19px;background:#fff"></div>
<div class="a" style="left:391px;top:427px;width:1px;height:19px;background:#fff"></div>
<div class="a" style="left:541px;top:427px;width:1px;height:19px;background:#fff"></div>
<div class="a" style="left:641px;top:427px;width:1px;height:19px;background:#fff"></div>
<div class="a" style="left:741px;top:427px;width:1px;height:19px;background:#fff"></div>
<div class="a" style="left:821px;top:427px;width:1px;height:19px;background:#fff"></div>
<div class="a" style="left:901px;top:427px;width:1px;height:19px;background:#fff"></div>
<div class="a" style="left:14px;top:467px;width:963px;height:19px;background:#f0f3f8"></div>
<div class="a" style="left:131px;top:467px;width:1px;height:19px;background:#fff"></div>
<div class="a" style="left:171px;top:467px;width:1px;height:19px;background:#fff"></div>
<div class="a" style="left:271px;top:467px;width:1px;height:19px;background:#fff"></div>
<div class="a" style="left:351px;top:467px;width:1px;height:19px;background:#fff"></div>
<div class="a" style="left:391px;top:467px;width:1px;height:19px;background:#fff"></div>
<div class="a" style="left:541px;top:467px;width:1px;height:19px;background:#fff"></div>
<div class="a" style="left:641px;top:467px;width:1px;height:19px;background:#fff"></div>
<div class="a" style="left:741px;top:467px;width:1px;height:19px;background:#fff"></div>
<div class="a" style="left:821px;top:467px;width:1px;height:19px;background:#fff"></div>
<div class="a" style="left:901px;top:467px;width:1px;height:19px;background:#fff"></div>
<div class="a" style="left:14px;top:507px;width:963px;height:19px;background:#f0f3f8"></div>
<div class="a" style="left:131px;top:507px;width:1px;height:19px;background:#fff"></div>
<div class="a" style="left:171px;top:507px;width:1px;height:19px;background:#fff"></div>
<div class="a" style="left:271px;top:507px;width:1px;height:19px;background:#fff"></div>
<div class="a" style="left:351px;top:507px;width:1px;height:19px;background:#fff"></div>
<div class="a" style="left:391px;top:507px;width:1px;height:19px;background:#fff"></div>
<div class="a" style="left:541px;top:507px;width:1px;height:19px;background:#fff"></div>
<div class="a" style="left:641px;top:507px;width:1px;height:19px;background:#fff"></div>
<div class="a" style="left:741px;top:507px;width:1px;height:19px;background:#fff"></div>
<div class="a" style="left:821px;top:507px;width:1px;height:19px;background:#fff"></div>
<div class="a" style="left:901px;top:507px;width:1px;height:19px;background:#fff"></div>
<div class="a" style="left:14px;top:547px;width:963px;height:19px;background:#f0f3f8"></div>
<div class="a" style="left:131px;top:547px;width:1px;height:19px;background:#fff"></div>
<div class="a" style="left:171px;top:547px;width:1px;height:19px;background:#fff"></div>
<div class="a" style="left:271px;top:547px;width:1px;height:19px;background:#fff"></div>
<div class="a" style="left:351px;top:547px;width:1px;height:19px;background:#fff"></div>
<div class="a" style="left:391px;top:547px;width:1px;height:19px;background:#fff"></div>
<div class="a" style="left:541px;top:547px;width:1px;height:19px;background:#fff"></div>
<div class="a" style="left:641px;top:547px;width:1px;height:19px;background:#fff"></div>
<div class="a" style="left:741px;top:547px;width:1px;height:19px;background:#fff"></div>
<div class="a" style="left:821px;top:547px;width:1px;height:19px;background:#fff"></div>
<div class="a" style="left:901px;top:547px;width:1px;height:19px;background:#fff"></div>
<div class="a" style="left:21px;top:145px;width:956px;height:25px;border:4px solid #ff8000;box-sizing:border-box"></div>
<div class="a" style="left:21px;top:264px;width:957px;height:27px;border:4px solid #ff8000;box-sizing:border-box"></div>
<div class="a" style="left:977px;top:147px;width:17px;height:440px;background:#eeeeee"></div>
<div class="a" style="left:977px;top:147px;width:16px;height:16px;border-top:1px solid #7a8a99;border-right:1px solid #7a8a99;box-sizing:border-box;background:#eeeeee;box-shadow:inset 1px 1px 0 #fff"></div>
<svg class="a" style="left:982px;top:153px" width="8" height="4"><polygon points="4,0 8,4 0,4" fill="#333"/></svg>
<div class="a" style="left:977px;top:162px;width:16px;height:391px;border:1px solid #6382bf;box-sizing:border-box;background:linear-gradient(90deg,#dde8f3,#ffffff 30%,#dde8f3 60%,#b8cfe5)"></div>
<div class="a" style="left:981px;top:355px;width:9px;height:1px;background:#6382bf"></div>
<div class="a" style="left:982px;top:356px;width:9px;height:1px;background:#fff"></div>
<div class="a" style="left:981px;top:357px;width:9px;height:1px;background:#6382bf"></div>
<div class="a" style="left:982px;top:358px;width:9px;height:1px;background:#fff"></div>
<div class="a" style="left:981px;top:359px;width:9px;height:1px;background:#6382bf"></div>
<div class="a" style="left:982px;top:360px;width:9px;height:1px;background:#fff"></div>
<div class="a" style="left:977px;top:553px;width:1px;height:17px;background:#7a8a99"></div>
<div class="a" style="left:992px;top:553px;width:1px;height:17px;background:#7a8a99"></div>
<div class="a" style="left:977px;top:570px;width:16px;height:16px;border:1px solid #7a8a99;box-sizing:border-box;background:#eeeeee;box-shadow:inset 1px 1px 0 #fff"></div>
<svg class="a" style="left:982px;top:577px" width="8" height="4"><polygon points="0,0 8,0 4,4" fill="#333"/></svg>
<div class="a" style="left:12px;top:590px;width:984px;height:44px;border:1px solid #999999;box-sizing:border-box;background:#fff"></div>
<div class="a" style="left:14px;top:592px;width:980px;height:19px;background:#eeeeee"></div>
<div class="a" style="left:14px;top:611px;width:980px;height:1px;background:#7a8a99"></div>
<div class="a" style="left:133px;top:592px;width:1px;height:19px;background:#7a8a99"></div>
<div class="a" style="left:253px;top:592px;width:1px;height:19px;background:#7a8a99"></div>
<div class="a" style="left:373px;top:592px;width:1px;height:19px;background:#7a8a99"></div>
<div class="a" style="left:493px;top:592px;width:1px;height:19px;background:#7a8a99"></div>
<div class="a" style="left:613px;top:592px;width:1px;height:19px;background:#7a8a99"></div>
<div class="a" style="left:758px;top:592px;width:1px;height:19px;background:#7a8a99"></div>
<div class="a" style="left:878px;top:592px;width:1px;height:19px;background:#7a8a99"></div>
<div class="a" style="left:14px;top:613px;width:980px;height:18px;background:#f0f3f8"></div>
<div class="a" style="left:133px;top:612px;width:1px;height:19px;background:#fff"></div>
<div class="a" style="left:253px;top:612px;width:1px;height:19px;background:#fff"></div>
<div class="a" style="left:373px;top:612px;width:1px;height:19px;background:#fff"></div>
<div class="a" style="left:493px;top:612px;width:1px;height:19px;background:#fff"></div>
<div class="a" style="left:613px;top:612px;width:1px;height:19px;background:#fff"></div>
<div class="a" style="left:758px;top:612px;width:1px;height:19px;background:#fff"></div>
<div class="a" style="left:878px;top:612px;width:1px;height:19px;background:#fff"></div>
<div class="t" style="left:13px;top:596px;width:119px;text-align:center;font-size:11.7px;color:#333;letter-spacing:0.45px">Dating</div>
<div class="t" style="left:14px;top:616px;width:116px;text-align:right;font-size:11.7px;color:#000;letter-spacing:0.45px">0.00</div>
<div class="t" style="left:133px;top:596px;width:119px;text-align:center;font-size:11.7px;color:#333;letter-spacing:0.45px">Current</div>
<div class="t" style="left:134px;top:616px;width:116px;text-align:right;font-size:11.7px;color:#000;letter-spacing:0.45px">5,769.97</div>
<div class="t" style="left:253px;top:596px;width:119px;text-align:center;font-size:11.7px;color:#333;letter-spacing:0.45px">30 Days</div>
<div class="t" style="left:254px;top:616px;width:116px;text-align:right;font-size:11.7px;color:#000;letter-spacing:0.45px">1,091.58</div>
<div class="t" style="left:373px;top:596px;width:119px;text-align:center;font-size:11.7px;color:#333;letter-spacing:0.45px">60 Days</div>
<div class="t" style="left:374px;top:616px;width:116px;text-align:right;font-size:11.7px;color:#000;letter-spacing:0.45px">0.00</div>
<div class="t" style="left:493px;top:596px;width:119px;text-align:center;font-size:11.7px;color:#333;letter-spacing:0.70px">90 Days +</div>
<div class="t" style="left:494px;top:616px;width:116px;text-align:right;font-size:11.7px;color:#000;letter-spacing:0.45px">0.00</div>
<div class="t" style="left:614px;top:596px;width:144px;text-align:center;font-size:11.7px;color:#333;letter-spacing:0.45px">Total</div>
<div class="t" style="left:614px;top:616px;width:141px;text-align:right;font-size:11.7px;color:#000;letter-spacing:0.45px">6,861.55</div>
<div class="t" style="left:758px;top:596px;width:119px;text-align:center;font-size:11.7px;color:#333;letter-spacing:0.45px">Discount</div>
<div class="t" style="left:759px;top:616px;width:116px;text-align:right;font-size:11.7px;color:#000;letter-spacing:0.45px">0.00</div>
<div class="t" style="left:880px;top:596px;width:114px;text-align:center;font-size:11.7px;color:#333;letter-spacing:0.75px">Orders</div>
</body></html>
